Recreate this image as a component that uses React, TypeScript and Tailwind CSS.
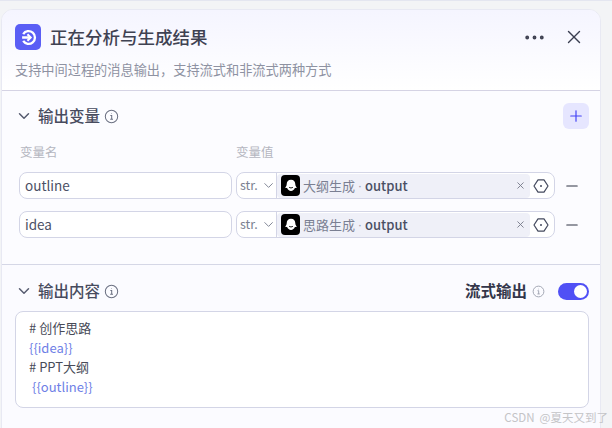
import { ChevronDown, Plus, X, Minus, Ellipsis } from 'lucide-react'

const font = { fontFamily: '"Noto Sans CJK SC", "Noto Sans", sans-serif' }

function InfoIcon({ className }: { className: string }) {
  return (
    <svg viewBox="0 0 16 16" fill="none" stroke="currentColor" strokeWidth="1.1" className={className}>
      <circle cx="8" cy="8" r="6.6" />
      <path d="M6.8 7h1.4v4M6.6 11h3" />
      <circle cx="8" cy="4.9" r="0.5" fill="currentColor" stroke="none" />
    </svg>
  )
}

function BotIcon() {
  return (
    <div className="w-[19px] h-[21px] shrink-0 rounded-[4px] bg-black flex items-center justify-center">
      <svg viewBox="0 0 20 20" className="w-[18px] h-[18px]">
        <path d="M10 3c3 0 4.800 2.200 4.800 5 0 1.400.6 2.700 2 3.800-.9.500-1.700.6-2.500.5-.7 2-2.300 3.200-4.300 3.200s-3.600-1.200-4.300-3.200c-.8.100-1.600 0-2.500-.5 1.400-1.100 2-2.400 2-3.800 0-2.800 1.800-5 4.800-5z" fill="#fff" />
        <path d="M7.800 11.300c.9 1.100 3.500 1.100 4.400 0" stroke="#000" strokeWidth="1" fill="none" />
      </svg>
    </div>
  )
}

function VarRow({ name, source }: { name: string; source: string }) {
  return (
    <div className="flex items-center h-[27px]">
      <div className="w-[213px] h-full shrink-0 rounded-lg border border-[#d3d5e6] bg-white flex items-center pl-[5px] text-[13.500px] text-[#4b5065]">
        {name}
      </div>
      <div className="ml-[4px] w-[319px] h-full shrink-0 rounded-lg border border-[#d3d5e6] bg-white flex items-center">
        <div className="w-[40px] h-full shrink-0 border-r border-[#d3d5e6] flex items-center pl-[3px] text-[12.500px] text-[#7a7f90]">
          str.
          <ChevronDown className="w-[17px] h-[17px] ml-[3px] text-[#676d80]" strokeWidth={1.300} />
        </div>
        <div className="w-[253px] h-[24px] shrink-0 rounded-[4px] bg-[#eff0f8] flex items-center pl-[4px]">
          <BotIcon />
          <span className="ml-[3px] text-[13px] text-[#7a7f92]">{source}</span>
          <span className="w-[10px] text-center font-['Liberation_Sans'] text-[13px] text-[#9a9eae]">·</span>
          <span className="text-[13px] font-medium text-[#4a4f63]">output</span>
          <X className="ml-auto mr-[4px] w-[11px] h-[11px] text-[#777b8a]" strokeWidth={2} />
        </div>
        <svg viewBox="0 0 16 16" fill="none" stroke="#444a5e" strokeWidth="1.200" className="ml-[3px] w-[16px] h-[16px] shrink-0">
          <path d="M5 1.800h6L15 8l-4 6.200H5L1 8z" strokeLinejoin="round" />
          <circle cx="8" cy="8" r="1" fill="#444a5e" stroke="none" />
        </svg>
      </div>
      <Minus className="ml-[8px] w-[18px] h-[18px] text-[#2f3344]" strokeWidth={1.400} />
    </div>
  )
}

export default function App() {
  return (
    <div style={font} className="relative w-[612px] h-[428px] overflow-hidden bg-[#f3f4f6] border-t border-[#e4e6f0] pt-[8px] pl-[1px]">
      <div className="w-[600px] h-[420px] rounded-t-xl border border-[#e8e9f3] bg-[#fbfbff] overflow-hidden">
        <div className="h-[81px] border-b border-[#d5d3e4] bg-gradient-to-b from-[#f5f5ff] to-white px-[13px] pt-[14px]">
          <div className="flex items-center h-[26px]">
            <div className="w-[26px] h-[26px] rounded-[5px] bg-[#5a5ef5] flex items-center justify-center">
              <svg viewBox="0 0 16 16" className="w-[17px] h-[17px]" fill="none" stroke="#fff" strokeWidth="2.200">
                <path d="M3 4.800A6 6 0 1 1 3 11.200" />
                <path d="M2 8h7.500" />
                <path d="M7 5l3 3-3 3" strokeWidth="2" />
              </svg>
            </div>
            <span className="ml-[9px] text-[17.500px] font-medium text-[#3f4252]">正在分析与生成结果</span>
            <Ellipsis className="ml-auto w-[25px] h-[25px] text-[#3f4252]" strokeWidth={1.700} />
            <X className="ml-[16px] mr-[2px] w-[22px] h-[22px] text-[#3a3e50]" strokeWidth={1.500} />
          </div>
          <div className="mt-[11px] text-[13.200px] leading-[18px] text-[#8e92a2]">支持中间过程的消息输出，支持流式和非流式两种方式</div>
        </div>

        <div className="h-[174px] border-b border-[#d5d7e6] bg-[#fcfcff] px-[13px] pt-[12px]">
          <div className="flex items-center h-[26px]">
            <ChevronDown className="w-[18px] h-[18px] text-[#575c70]" strokeWidth={2} />
            <span className="ml-[5px] text-[15.500px] font-medium text-[#474b5e]">输出变量</span>
            <InfoIcon className="ml-[4px] w-[15px] h-[15px] text-[#6b7082]" />
            <div className="ml-auto mr-[-2px] w-[26px] h-[26px] rounded-md bg-[#e6e6ff] flex items-center justify-center">
              <Plus className="w-[18px] h-[18px] text-[#4343f5]" strokeWidth={1.600} />
            </div>
          </div>
          <div className="flex mt-[14px] ml-[5px] h-[18px] items-center text-[12.500px] text-[#b4b6c0]">
            <span className="w-[216px]">变量名</span>
            <span>变量值</span>
          </div>
          <div className="flex flex-col gap-[12px] mt-[11px] ml-[4px]">
            <VarRow name="outline" source="大纲生成" />
            <VarRow name="idea" source="思路生成" />
          </div>
        </div>

        <div className="px-[13px] pt-[13px]">
          <div className="flex items-center h-[26px]">
            <ChevronDown className="w-[18px] h-[18px] text-[#575c70]" strokeWidth={2} />
            <span className="ml-[5px] text-[15.500px] font-medium text-[#474b5e]">输出内容</span>
            <InfoIcon className="ml-[4px] w-[15px] h-[15px] text-[#6b7082]" />
            <span className="ml-auto text-[15.500px] font-bold text-[#33364a]">流式输出</span>
            <InfoIcon className="ml-[5px] w-[13px] h-[13px] text-[#9a9eac]" />
            <div className="ml-[13px] mr-[-2px] w-[31px] h-[17px] rounded-full bg-[#5050f5] flex items-center justify-end pr-[2px]">
              <div className="w-[13px] h-[13px] rounded-full bg-white" />
            </div>
          </div>
          <div className="mt-[7px] h-[97px] w-[574px] rounded-lg border border-[#d3d5e6] bg-white pl-[13px] pt-[6px] text-[13px] leading-[19.700px] text-[#484b58]">
            <div># 创作思路</div>
            <div className="text-[#6e80e6]">{'{{idea}}'}</div>
            <div># PPT大纲</div>
            <div className="pl-[3px] text-[#6e80e6]">{'{{outline}}'}</div>
          </div>
        </div>
      </div>
      <span className="absolute right-[4px] bottom-[3px] text-[11.500px] leading-[16px] text-[#c4c4c7]">CSDN &nbsp;@夏天又到了</span>
    </div>
  )
}
